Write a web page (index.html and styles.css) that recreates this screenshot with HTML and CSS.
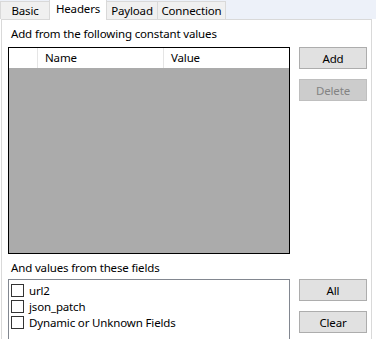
FILE: index.html
```html
<!DOCTYPE html>
<html lang="en">
<head>
    <meta charset="UTF-8">
    <title>Headers</title>
    <link rel="stylesheet" href="styles.css">
</head>
<body>
    <div class="tabs">
        <div class="tab tab-basic">Basic</div>
        <div class="tab tab-headers active">Headers</div>
        <div class="tab tab-payload">Payload</div>
        <div class="tab tab-connection">Connection</div>
    </div>
    <div class="panel">
        <div class="caption">Add from the following constant values</div>
        <div class="section">
            <div class="grid">
                <div class="grid-head">
                    <div class="col col-sel"></div>
                    <div class="col col-name">Name</div>
                    <div class="col col-value">Value</div>
                </div>
                <div class="grid-body"></div>
            </div>
            <div class="buttons">
                <button>Add</button>
                <button disabled>Delete</button>
            </div>
        </div>
        <div class="caption caption-fields">And values from these fields</div>
        <div class="section">
            <div class="listbox">
                <label class="item"><span class="check"></span>url2</label>
                <label class="item"><span class="check"></span>json_patch</label>
                <label class="item"><span class="check"></span>Dynamic or Unknown Fields</label>
            </div>
            <div class="buttons">
                <button>All</button>
                <button>Clear</button>
            </div>
        </div>
    </div>
</body>
</html>
```

FILE: styles.css
```css
* {
    margin: 0;
    padding: 0;
    box-sizing: border-box;
}

body {
    font-family: "Noto Sans", "Open Sans", sans-serif;
    font-size: 11.5px;
    letter-spacing: -0.15px;
    color: #000;
    background: #ffffff;
    height: 339px;
    overflow: hidden;
    display: flex;
    flex-direction: column;
}

.tabs {
    display: flex;
    align-items: flex-end;
    height: 19px;
    background: #edf1f9;
}

.tab {
    height: 18px;
    line-height: 17px;
    text-align: center;
    background: #f0f0f0;
    border: 1px solid #d9d9d9;
    border-bottom: none;
    margin-right: -1px;
}

.tab-basic {
    width: 50px;
}

.tab-headers {
    width: 58px;
}

.tab-payload {
    width: 52px;
}

.tab-connection {
    width: 69px;
}

.tab.active {
    height: 21px;
    margin-bottom: -1px;
    background: #ffffff;
    position: relative;
    z-index: 1;
}

.panel {
    flex: 1;
    margin: 0 4px 0 1px;
    border: 1px solid #d9d9d9;
    border-bottom: none;
    background: #ffffff;
    padding: 6px 4px 0 6px;
}

.caption {
    line-height: 16px;
    padding-left: 3px;
    margin-bottom: 5px;
}

.caption-fields {
    margin-top: 6px;
    margin-bottom: 3px;
}

.section {
    display: flex;
    gap: 9px;
    align-items: flex-start;
}

.grid {
    width: 283px;
    height: 207px;
    border: 1px solid #000;
    display: flex;
    flex-direction: column;
}

.grid-head {
    display: flex;
    height: 20px;
    background: #ffffff;
}

.col {
    line-height: 19px;
    padding-left: 7px;
    border-right: 1px solid #e5e5e5;
}

.col-sel {
    width: 29px;
}

.col-name {
    width: 126px;
}

.col-value {
    flex: 1;
    border-right: none;
}

.grid-body {
    flex: 1;
    background: #ababab;
}

.buttons {
    display: flex;
    flex-direction: column;
    gap: 10px;
}

button {
    width: 68px;
    height: 22px;
    font-family: inherit;
    font-size: inherit;
    letter-spacing: inherit;
    color: #000;
    background: #e1e1e1;
    border: 1px solid #adadad;
}

button:disabled {
    color: #838383;
    background: #cccccc;
    border-color: #bfbfbf;
}

.listbox {
    width: 283px;
    height: 70px;
    border: 1px solid #828790;
    padding: 2px 0 0 2px;
}

.item {
    display: flex;
    align-items: center;
    height: 16px;
    gap: 5px;
}

.check {
    width: 13px;
    height: 13px;
    border: 1px solid #333333;
    background: #ffffff;
}
```
